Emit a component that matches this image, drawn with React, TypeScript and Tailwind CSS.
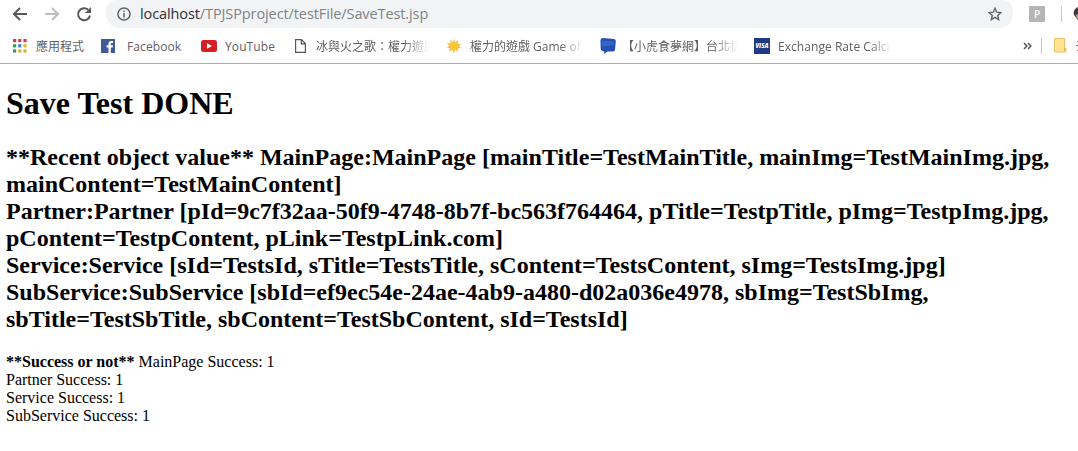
import type { ReactNode } from "react";

const SERVICE_LINES = ["Partner Success: 1", "Service Success: 1", "SubService Success: 1"];

const DOTS = [
  "#d93a4e", "#d93a4e", "#d93a4e",
  "#2f9e57", "#3b82c4", "#e0b030",
  "#2f9e57", "#e0b030", "#e0b030",
];

function AppsIcon() {
  return (
    <svg width="14" height="14" viewBox="0 0 14 14" className="shrink-0">
      {DOTS.map((c, i) => (
        <rect key={i} x={(i % 3) * 5.2} y={Math.floor(i / 3) * 5.2} width="3.2" height="3.2" fill={c} />
      ))}
    </svg>
  );
}

function Label({ children, className }: { children: ReactNode; className: string }) {
  return <span className={`block shrink-0 overflow-hidden whitespace-nowrap pt-[2px] text-[#5f6064] ${className}`}>{children}</span>;
}

function Toolbar() {
  return (
    <div className="flex h-7 shrink-0 items-center">
      <svg width="106" height="28" viewBox="0 0 106 28" fill="none" strokeWidth="2" className="shrink-0">
        <path d="M27 14H14.5M20 8l-6 6 6 6" stroke="#55585c" />
        <path d="M45 14h12.500M52 8l6 6-6 6" stroke="#bdbec0" />
        <path d="M88.200 9.800A6 6 0 1 0 90 15.500" stroke="#55585c" />
        <path d="M91 7v6h-6z" fill="#55585c" />
      </svg>
      <div className="flex h-7 w-[907px] shrink-0 items-center rounded-br-[14px] rounded-bl-[14px] rounded-tl-[10px] rounded-tr-[10px] bg-[#f1f3f4] pl-[11px]">
        <svg width="14" height="14" viewBox="0 0 14 14" fill="none" stroke="#5f6368" strokeWidth="1.500" className="shrink-0">
          <circle cx="7" cy="7" r="6.100" />
          <path d="M7 6v4.500M7 3.400v1.500" />
        </svg>
        <span className="ml-[9px] flex-1 whitespace-nowrap font-['Open_Sans',sans-serif] text-[14.5px] leading-7 tracking-[-0.1px] text-[#7f8387]">
          <span className="text-[#303134]">localhost</span>/TPJSPproject/testFile/SaveTest.jsp
        </span>
        <svg width="14" height="14" viewBox="0 0 14 14" fill="none" stroke="#5f6368" strokeWidth="1.400" className="mr-[11px] shrink-0">
          <path d="M7 1.300l1.700 3.900 4.200.4-3.200 2.800 1 4.200L7 10.400l-3.700 2.200 1-4.200L1.100 5.600l4.200-.4z" />
        </svg>
      </div>
      <span className="ml-4 flex size-4 shrink-0 items-center justify-center rounded-[1px] bg-[#b5b5b5] font-['Open_Sans',sans-serif] text-[10px] font-semibold text-white">P</span>
      <span className="ml-4 h-4 w-px shrink-0 bg-[#c8cacc]" />
      <svg width="5" height="16" viewBox="0 0 5 16" className="ml-auto shrink-0">
        <path d="M5 1C1 3 0 6 1 9l4 5z" fill="#40383a" />
        <path d="M5 8L2.500 9 5 14z" fill="#a49a94" />
      </svg>
    </div>
  );
}

function BookmarksBar() {
  return (
    <div className="flex h-9 shrink-0 items-center border-b border-[#adadad] pl-[13px] font-['Open_Sans','Noto_Sans_CJK_TC',sans-serif] text-[12px] leading-5">
      <AppsIcon />
      <Label className="ml-[9px] w-[65px]">應用程式</Label>
      <svg width="14" height="14" viewBox="0 0 14 14" className="shrink-0">
        <path d="M0 0h14v14H0z" fill="#405b98" />
        <path d="M7.500 14V8.500H5.600V6.300h1.900V4.800c0-2 1.100-2.900 2.900-2.900h1.700v2h-1.200c-.9 0-1.100.4-1.100 1.100v1.300h2.200l-.3 2.200H9.800V14z" fill="white" />
      </svg>
      <Label className="ml-3 w-[74px] tracking-[0.1px]">Facebook</Label>
      <svg width="16" height="12" viewBox="0 0 16 12" className="shrink-0">
        <rect width="16" height="12" rx="2.500" fill="#d32027" />
        <path d="M6 3.300v5.400L11 6z" fill="white" />
      </svg>
      <Label className="ml-2 w-[70px] tracking-[0.1px]">YouTube</Label>
      <svg width="11" height="14" viewBox="0 0 11 14" fill="none" stroke="#55575b" strokeWidth="1.200" className="shrink-0">
        <path d="M.6.600h5.900l3.900 3.900v8.900H.6zM6.300.600v4.200h4.100" />
      </svg>
      <Label className="ml-[10px] w-[113px] [mask-image:linear-gradient(to_right,black_78%,transparent_100%)]">冰與火之歌：權力遊戲</Label>
      <span className="w-[17px] shrink-0" />
      <svg width="16" height="16" viewBox="0 0 16 16" className="shrink-0">
        <path d="M8 .5l1.200 3.800L12.500 2l-1 4 4-.1L12.500 8l3 2.300-4-.1.900 3.800-3.200-2.300L7.700 15.500l-1.400-3.700L3 14l.8-3.900-3.300-.4 2.800-2L1 5l3.500.4-.3-3.700L7 4.300z" fill="#edbd55" />
        <circle cx="8" cy="8" r="3.900" fill="#ffc72e" />
      </svg>
      <Label className="ml-2 w-[113px] [mask-image:linear-gradient(to_right,black_80%,transparent_100%)]">權力的遊戲 Game of Thrones</Label>
      <span className="w-[17px] shrink-0" />
      <svg width="16" height="16" viewBox="0 0 16 16" className="shrink-0">
        <path d="M3 0L14 1q2 .2 1.800 2.200L15 11.500q-.2 2-2 2H7.500L4.200 16V13.500L2.500 13Q.8 12.700.7 11L.5 2.500Q.5 0 3 0z" fill="#2450b4" />
        <path d="M2 2.500l12 1-.4 3.500L2 9z" fill="#3267c6" />
      </svg>
      <Label className="ml-[6px] w-[116px] [mask-image:linear-gradient(to_right,black_78%,transparent_100%)]">【小虎食夢網】台北捷運</Label>
      <span className="w-4 shrink-0" />
      <span className="flex size-4 shrink-0 items-center justify-center bg-[#203b85] font-['Open_Sans',sans-serif] text-[6px] font-extrabold italic leading-none text-white">VISA</span>
      <Label className="ml-2 w-[113px] tracking-[0.05px] [mask-image:linear-gradient(to_right,black_82%,transparent_100%)]">Exchange Rate Calculator</Label>
      <svg width="9" height="8" viewBox="0 0 9 8" fill="none" stroke="#505357" strokeWidth="1.500" className="ml-[132px] shrink-0">
        <path d="M1 1l2.800 3L1 7M5 1l2.800 3L5 7" />
      </svg>
      <span className="ml-[9px] h-4 w-px shrink-0 bg-[#c4c6c8]" />
      <svg width="13" height="15" viewBox="0 0 13 15" className="ml-3 shrink-0">
        <path d="M.5.500h10v9.500h1.500v4H.5z" fill="#ffe391" stroke="#e4c466" />
        <path d="M10.500 10v3" stroke="#dbb247" />
      </svg>
      <svg width="2" height="12" viewBox="0 0 2 12" className="ml-auto shrink-0">
        <path d="M1 1h1v1H1zM0 5h2v1H0zM1 10h1v1H1z" fill="#b35b50" />
      </svg>
    </div>
  );
}

export default function App() {
  return (
    <div className="flex h-[451px] w-[1078px] flex-col overflow-hidden bg-white">
      <Toolbar />
      <BookmarksBar />
      <main className="pl-[6px] pt-[21px] font-['Liberation_Serif',serif] text-black">
        <h1 className="text-[32px] font-bold leading-[37px]">Save Test DONE</h1>
        <h2 className="mt-[22px] whitespace-nowrap text-[24px] font-bold leading-[27px]">
          **Recent object value** MainPage:MainPage [mainTitle=TestMainTitle, mainImg=TestMainImg.jpg,
          <br />mainContent=TestMainContent]
          <br />Partner:Partner [pId=9c7f32aa-50f9-4748-8b7f-bc563f764464, pTitle=TestpTitle, pImg=TestpImg.jpg,
          <br />pContent=TestpContent, pLink=TestpLink.com]
          <br />Service:Service [sId=TestsId, sTitle=TestsTitle, sContent=TestsContent, sImg=TestsImg.jpg]
          <br />SubService:SubService [sbId=ef9ec54e-24ae-4ab9-a480-d02a036e4978, sbImg=TestSbImg,
          <br />sbTitle=TestSbTitle, sbContent=TestSbContent, sId=TestsId]
        </h2>
        <div className="mt-5 text-[16px] leading-[18px]">
          <p><b>**Success or not**</b> MainPage Success: 1</p>
          {SERVICE_LINES.map((line) => (
            <p key={line}>{line}</p>
          ))}
        </div>
      </main>
    </div>
  );
}
